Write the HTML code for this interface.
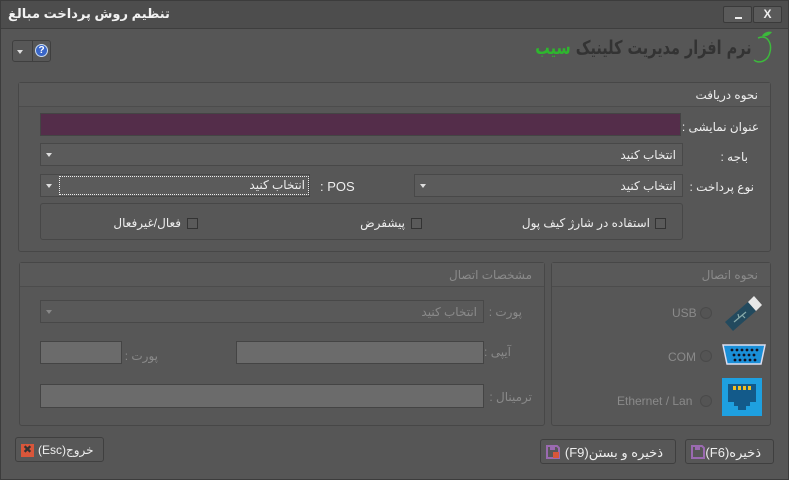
<!DOCTYPE html>
<html><head><meta charset="utf-8"><style>
*{box-sizing:border-box;margin:0;padding:0}
body{width:789px;height:480px;background:#565656;font-family:"Liberation Sans","DejaVu Sans",sans-serif;font-size:12px;color:#eee;position:relative;overflow:hidden}
.a{position:absolute}
.t{direction:rtl;white-space:nowrap}
.panel{position:absolute;border:1px solid #474747;border-radius:3px;background:#575757}
.hdr{position:absolute;left:0;right:0;top:0;height:24px;border-bottom:1px solid #4c4c4c;background:#595959}
.inp{position:absolute;border:1px solid #444;background:#5f5f5f}
.dd{position:absolute;border:1px solid #484848;background:#5b5b5b}
.dd .ar{position:absolute;left:5px;top:9px;width:0;height:0;border-left:3px solid transparent;border-right:3px solid transparent;border-top:4px solid #ddd}
.dd .tx{position:absolute;right:6px;top:4px;direction:rtl}
.cb{position:absolute;width:11px;height:11px;border:1px solid #333;background:#5a5a5a}
.btn{position:absolute;border:1px solid #3f3f3f;border-radius:3px;background:#575757}
.rad{position:absolute;width:12px;height:12px;border-radius:50%;border:1px solid #4a4a4a;background:#545454}
.dis{color:#8a8a8a}
</style></head><body>
<div class="a" style="left:0;top:0;width:789px;height:480px;border:1px solid #3c3c3c"></div>
<div class="a" style="left:1px;top:1px;width:787px;height:28px;background:#4d4d4d;border-bottom:1px solid #3e3e3e"></div>
<div class="a t" style="left:8px;top:6px;font-size:13px;font-weight:bold;color:#f2f2f2">تنظیم روش پرداخت مبالغ</div>
<div class="a" style="left:723px;top:6px;width:29px;height:17px;border:1px solid #3a3a3a;border-radius:2px;background:#5a5a5a"><div class="a" style="left:11px;top:10px;width:7px;height:2px;background:#eee"></div></div>
<div class="a" style="left:753px;top:6px;width:29px;height:17px;border:1px solid #3a3a3a;border-radius:2px;background:#5a5a5a;text-align:center;font-weight:bold;font-size:12px;line-height:15px">X</div>

<div class="a" style="left:12px;top:40px;width:39px;height:22px;border:1px solid #3f3f3f;border-radius:3px;background:#575757"><div class="a" style="left:19px;top:-1px;width:1px;height:22px;background:#3f3f3f"></div><div class="a" style="left:4px;top:9px;border-left:3px solid transparent;border-right:3px solid transparent;border-top:4px solid #ddd"></div><div class="a" style="left:22px;top:3px;width:13px;height:13px;border-radius:50%;background:#3a66c8;border:1px solid #cde;color:#fff;font-size:10px;font-weight:bold;text-align:center;line-height:11px">?</div></div>

<div class="a t" style="right:37px;top:37px;font-size:19px;font-weight:bold;color:#333;font-family:'DejaVu Sans',sans-serif;letter-spacing:-0.5px;transform:scaleX(0.76);transform-origin:right center">نرم افزار مدیریت کلینیک <span style="color:#2eb62e">سیب</span></div>
<svg class="a" style="left:750px;top:30px" width="24" height="38"><path d="M8 8 C18 4 22 14 20 22 C18 32 8 34 4 30" stroke="#3cb93c" stroke-width="1.5" fill="none"/><path d="M12 6 C14 2 19 1 22 2 C19 6 15 7 12 6Z" fill="#3cb93c"/></svg>

<div class="panel" style="left:18px;top:82px;width:753px;height:170px">
<div class="hdr"></div>
<div class="a t" style="right:12px;top:5px">نحوه دریافت</div>
</div>
<div class="a" style="left:40px;top:113px;width:641px;height:23px;background:#542d4a;border:1px solid #444"></div>
<div class="a t" style="right:30px;top:120px;font-size:12px">عنوان نمایشی :</div>
<div class="dd" style="left:40px;top:143px;width:643px;height:23px"><div class="ar"></div><div class="tx">انتخاب کنید</div></div>
<div class="a t" style="right:41px;top:150px;font-size:12px">باجه :</div>
<div class="dd" style="left:414px;top:174px;width:269px;height:23px"><div class="ar"></div><div class="tx">انتخاب کنید</div></div>
<div class="a t" style="right:35px;top:180px;font-size:12px">نوع پرداخت :</div>
<div class="dd" style="left:40px;top:174px;width:270px;height:23px"><div class="ar"></div><div class="a" style="left:18px;top:1px;width:250px;height:19px;border:1px dotted #eee"></div><div class="tx" style="right:4px;top:3px">انتخاب کنید</div></div>
<div class="a" style="left:320px;top:179px;font-size:13px">: POS</div>
<div class="a" style="left:40px;top:203px;width:643px;height:37px;border:1px solid #474747;border-radius:3px"></div>
<div class="cb" style="left:655px;top:218px"></div><div class="a t" style="right:139px;top:216px">استفاده در شارژ کیف پول</div>
<div class="cb" style="left:411px;top:218px"></div><div class="a t" style="right:384px;top:216px">پیشفرض</div>
<div class="cb" style="left:187px;top:218px"></div><div class="a t" style="right:608px;top:216px">فعال/غیرفعال</div>

<div class="panel" style="left:19px;top:262px;width:526px;height:164px">
<div class="hdr"></div>
<div class="a t dis" style="right:12px;top:5px">مشخصات اتصال</div>
</div>
<div class="dd" style="left:40px;top:300px;width:444px;height:23px;background:#595959"><div class="ar" style="border-top-color:#888"></div><div class="tx dis">انتخاب کنید</div></div>
<div class="a t dis" style="right:267px;top:305px">پورت :</div>
<div class="inp" style="left:236px;top:341px;width:248px;height:23px;background:#6b6b6b"></div>
<div class="a t dis" style="right:278px;top:345px">آیپی :</div>
<div class="inp" style="left:40px;top:341px;width:82px;height:23px;background:#6b6b6b"></div>
<div class="a t dis" style="right:631px;top:349px">پورت :</div>
<div class="inp" style="left:40px;top:384px;width:444px;height:24px;background:#6b6b6b"></div>
<div class="a t dis" style="right:257px;top:390px">ترمینال :</div>

<div class="panel" style="left:551px;top:262px;width:220px;height:164px">
<div class="hdr"></div>
<div class="a t dis" style="right:12px;top:5px">نحوه اتصال</div>
</div>
<div class="a dis" style="left:672px;top:306px">USB</div><div class="rad" style="left:700px;top:307px"></div>
<div class="a dis" style="left:668px;top:350px">COM</div><div class="rad" style="left:700px;top:350px"></div>
<div class="a dis" style="left:617px;top:394px">Ethernet / Lan</div><div class="rad" style="left:700px;top:395px"></div>
<svg class="a" style="left:722px;top:292px" width="42" height="40"><path d="M3 30 L26 10 L34 19 L11 39 Z" fill="#234a5e"/><path d="M26 10 L32 4 L40 13 L34 19 Z" fill="#e8e8e8"/><path d="M12 30 L24 20 M17 26 L16 22 M20 23 L23 26" stroke="#8aa" stroke-width="1.2" fill="none"/></svg>
<svg class="a" style="left:721px;top:342px" width="46" height="26"><path d="M2 3h42l-4 19H6Z" fill="#1a8fd8" stroke="#dde" stroke-width="1.5"/><g fill="#112">
<circle cx="11" cy="8" r="1.4"/><circle cx="16" cy="8" r="1.4"/><circle cx="21" cy="8" r="1.4"/><circle cx="26" cy="8" r="1.4"/><circle cx="31" cy="8" r="1.4"/><circle cx="36" cy="8" r="1.4"/>
<circle cx="13" cy="13" r="1.4"/><circle cx="18" cy="13" r="1.4"/><circle cx="23" cy="13" r="1.4"/><circle cx="28" cy="13" r="1.4"/><circle cx="33" cy="13" r="1.4"/>
<circle cx="14" cy="18" r="1.4"/><circle cx="19" cy="18" r="1.4"/><circle cx="24" cy="18" r="1.4"/><circle cx="29" cy="18" r="1.4"/><circle cx="34" cy="18" r="1.4"/></g></svg>
<svg class="a" style="left:722px;top:378px" width="40" height="38"><rect width="40" height="38" fill="#1ea0e0"/><path d="M6 6h28v18h-6v4h-4v4h-8v-4h-4v-4H6Z" fill="#135a8a"/><rect x="11" y="8" width="3" height="4" fill="#f0c020"/><rect x="16" y="8" width="3" height="4" fill="#f0c020"/><rect x="21" y="8" width="3" height="4" fill="#f0c020"/><rect x="26" y="8" width="3" height="4" fill="#f0c020"/></svg>

<div class="btn" style="left:15px;top:437px;width:89px;height:25px"><div class="a" style="left:5px;top:6px;width:13px;height:13px;background:#d9563a;color:#333;font-size:11px;font-weight:bold;text-align:center;line-height:13px">✖</div><div class="a" style="left:22px;top:5px">(Esc)خروج</div></div>
<div class="btn" style="left:540px;top:439px;width:136px;height:25px"><svg class="a" style="left:5px;top:5px" width="14" height="14"><path d="M1 1h10l2 2v10H1Z" fill="none" stroke="#9a6ab0" stroke-width="2"/><rect x="4" y="2" width="5" height="3" fill="#9a6ab0"/><rect x="7" y="7" width="6" height="6" fill="#d9563a"/></svg><div class="a t" style="right:12px;top:5px;font-size:13px">ذخیره و بستن(F9)</div></div>
<div class="btn" style="left:685px;top:439px;width:89px;height:25px"><svg class="a" style="left:5px;top:5px" width="14" height="14"><path d="M1 1h10l2 2v10H1Z" fill="none" stroke="#9a6ab0" stroke-width="2"/><rect x="4" y="2" width="5" height="3" fill="#9a6ab0"/></svg><div class="a t" style="right:12px;top:5px;font-size:13px">ذخیره(F6)</div></div>
</body></html>
